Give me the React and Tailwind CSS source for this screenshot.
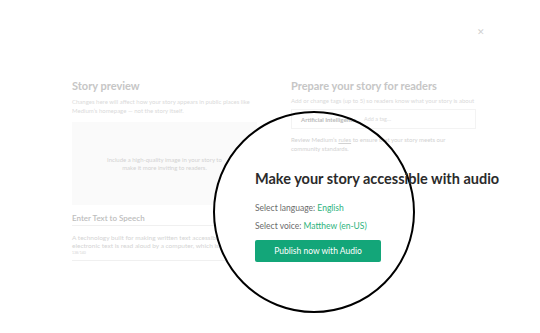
import React from "react";

const Page = () => {
  return (
    <div className="relative w-[540px] h-[333px] overflow-hidden bg-white font-['Lato',sans-serif]">
      <button className="absolute left-[477px] top-[27px] text-[9px] leading-none text-[#d0d0d0]">✕</button>

      <div className="flex gap-[34px] pl-[72px] pt-[79px]">
        {/* left column */}
        <div className="w-[185px] shrink-0">
          <h3 className="text-[11px] leading-[14px] font-bold text-[#c6c6c6]">Story preview</h3>
          <p className="mt-[4px] text-[6px] leading-[9px] text-[#dadada]">
            Changes here will affect how your story appears in public places like Medium’s homepage — not the story itself.
          </p>
          <div className="mt-[7px] h-[83px] bg-[#fafafa] flex items-center justify-center px-[30px]">
            <p className="text-center text-[6px] leading-[8px] text-[#d2d2d2]">
              Include a high-quality image in your story to make it more inviting to readers.
            </p>
          </div>
          <div className="mt-[8px] border-b border-[#f0f0f0] pb-[1px]">
            <h4 className="text-[8px] leading-[11px] font-semibold text-[#bdbdbd]">Enter Text to Speech</h4>
          </div>
          <div className="border-b border-[#f0f0f0] pt-[8px] pb-[4px]">
            <p className="text-[6.5px] leading-[8px] text-[#d4d4d4]">
              A technology built for making written text accessible where electronic text is read aloud by a computer, which is used...
            </p>
            <p className="text-[3.5px] leading-[6px] text-[#d4d4d4]">138/140</p>
          </div>
        </div>

        {/* right column */}
        <div className="relative z-20 w-[185px] shrink-0">
          <h3 className="text-[11px] leading-[14px] font-bold text-[#c6c6c6]">Prepare your story for readers</h3>
          <p className="mt-[3px] text-[6px] leading-[9px] text-[#dadada]">
            Add or change tags (up to 5) so readers know what your story is about
          </p>
          <div className="mt-[4px] h-[20px] border border-[#f3f3f3] flex items-center gap-[8px] pl-[9px]">
            <span className="text-[6px] font-bold text-[#b9b9b9]">Artificial Intelligence</span>
            <span className="text-[5.5px] text-[#dadada]">Add a tag…</span>
          </div>
          <p className="mt-[7px] text-[6px] leading-[8.5px] text-[#d2d2d2]">
            Review Medium’s <span className="underline">rules</span> to ensure that your story meets our community standards.
          </p>
        </div>
      </div>

      {/* magnifier */}
      <div className="absolute left-[213px] top-[111px] z-10 h-[202px] w-[202px] rounded-full bg-white" />
      <div className="absolute left-[213px] top-[111px] z-30 h-[202px] w-[202px] rounded-full border-2 border-black" />

      <div className="absolute left-[255px] top-[169px] z-40">
        <h2 className="text-[14.5px] leading-[20px] font-bold text-[#2b2b2b] whitespace-nowrap">
          Make your story accessible with audio
        </h2>
        <p className="mt-[13px] text-[8.5px] leading-[12px] text-[#6b6b6b]">
          Select language: <span className="text-[#2bb27c]">English</span>
        </p>
        <p className="mt-[6px] text-[8.5px] leading-[12px] text-[#6b6b6b]">
          Select voice: <span className="text-[#2bb27c]">Matthew (en-US)</span>
        </p>
        <button className="mt-[8px] h-[22px] w-[126px] rounded-[2px] bg-[#13a679] text-[8.5px] text-white">
          Publish now with Audio
        </button>
      </div>
    </div>
  );
};

export default function App() {
  return <Page />;
}
